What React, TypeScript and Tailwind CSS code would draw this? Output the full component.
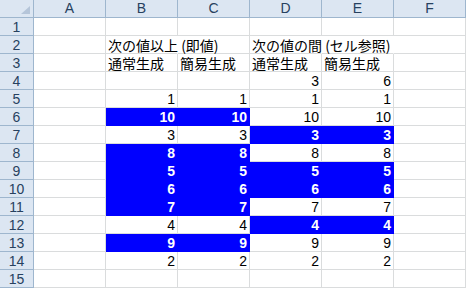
import React from "react";

type Cell = { v?: string; blue?: boolean; jp?: boolean; noR?: boolean };

const E: Cell = {};
const n = (v: string, blue = false): Cell => ({ v, blue });

const rows: Cell[][] = [
  [E, E, E, E, E, E],
  [E, { v: "次の値以上 (即値)", jp: true, noR: true }, E, { v: "次の値の間 (セル参照)", jp: true, noR: true }, { noR: true }, E],
  [E, { v: "通常生成", jp: true }, { v: "簡易生成", jp: true }, { v: "通常生成", jp: true }, { v: "簡易生成", jp: true }, E],
  [E, E, E, n("3"), n("6"), E],
  [E, n("1"), n("1"), n("1"), n("1"), E],
  [E, n("10", true), n("10", true), n("10"), n("10"), E],
  [E, n("3"), n("3"), n("3", true), n("3", true), E],
  [E, n("8", true), n("8", true), n("8"), n("8"), E],
  [E, n("5", true), n("5", true), n("5", true), n("5", true), E],
  [E, n("6", true), n("6", true), n("6", true), n("6", true), E],
  [E, n("7", true), n("7", true), n("7"), n("7"), E],
  [E, n("4"), n("4"), n("4", true), n("4", true), E],
  [E, n("9", true), n("9", true), n("9"), n("9"), E],
  [E, n("2"), n("2"), n("2"), n("2"), E],
  [E, E, E, E, E, E],
];

const cols = ["A", "B", "C", "D", "E", "F"];

export default function App() {
  return (
    <div className="w-[466px] h-[289px] bg-white overflow-hidden">
      <div className="grid grid-cols-[34px_repeat(6,72px)] auto-rows-[18px]">
        <div className="relative bg-[#dce6f2] border-r border-b border-[#9eb6ce]">
          <div className="absolute right-[3px] bottom-[3px] w-0 h-0 border-l-[9px] border-l-transparent border-b-[8px] border-b-[#b5c5d9]" />
        </div>
        {cols.map((c) => (
          <div
            key={c}
            className="bg-[#dce6f2] border-r border-b border-[#9eb6ce] flex items-center justify-center text-[14px] text-[#27415f] font-['Liberation_Sans',sans-serif]"
          >
            {c}
          </div>
        ))}
        {rows.map((r, i) => (
          <React.Fragment key={i}>
            <div className="bg-[#dce6f2] border-r border-b border-[#9eb6ce] flex items-end justify-center pb-[1px] text-[14px] leading-none text-[#27415f] font-['Liberation_Sans',sans-serif]">
              {i + 1}
            </div>
            {r.map((c, j) => (
              <div
                key={j}
                className={
                  "border-b flex items-end " +
                  (c.blue
                    ? "bg-[#0000ff] border-[#0000ff] border-r "
                    : c.noR
                    ? "border-[#dadcdd] border-r border-r-transparent "
                    : "border-[#dadcdd] border-r ") +
                  (c.jp
                    ? "justify-start pl-[2px] overflow-visible whitespace-nowrap text-[14px] leading-[14px] pb-[1px] text-black font-['Noto_Sans_CJK_JP',sans-serif]"
                    : "justify-end pr-[2px] pb-[1px] text-[14px] leading-none font-['Liberation_Sans',sans-serif] " +
                      (c.blue ? "text-white font-bold" : "text-black"))
                }
              >
                {c.v ? <span className="relative z-10">{c.v}</span> : null}
              </div>
            ))}
          </React.Fragment>
        ))}
      </div>
    </div>
  );
}
